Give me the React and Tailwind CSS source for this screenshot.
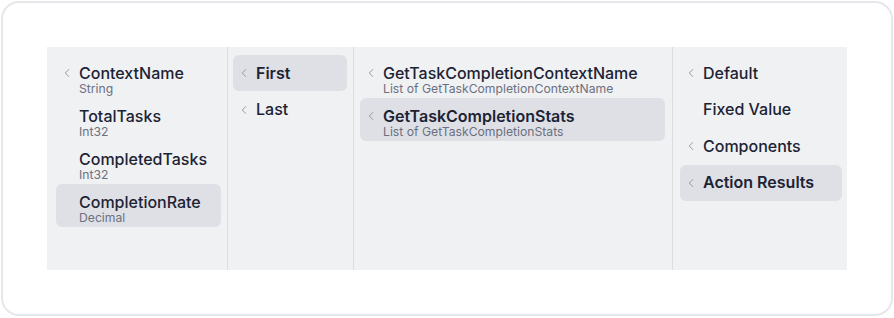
import { ChevronLeft } from "lucide-react";

const COLUMNS = [
  {
    id: "fields",
    width: "w-[181px]",
    pad: "pl-[9px] pr-[6px]",
    items: [
      { label: "ContextName", sub: "String", chevron: true },
      { label: "TotalTasks", sub: "Int32" },
      { label: "CompletedTasks", sub: "Int32" },
      { label: "CompletionRate", sub: "Decimal", active: true },
    ],
  },
  {
    id: "pick",
    width: "w-[126px]",
    pad: "pl-[5px] pr-[6px]",
    items: [
      { label: "First", chevron: true, active: true, strong: true },
      { label: "Last", chevron: true },
    ],
  },
  {
    id: "actions",
    width: "w-[319px]",
    pad: "pl-[6px] pr-[7px]",
    items: [
      {
        label: "GetTaskCompletionContextName",
        sub: "List of GetTaskCompletionContextName",
        chevron: true,
      },
      {
        label: "GetTaskCompletionStats",
        sub: "List of GetTaskCompletionStats",
        chevron: true,
        active: true,
        strong: true,
      },
    ],
  },
  {
    id: "source",
    width: "flex-1",
    pad: "pl-[7px] pr-[5px]",
    last: true,
    items: [
      { label: "Default", chevron: true },
      { label: "Fixed Value" },
      { label: "Components", chevron: true },
      { label: "Action Results", chevron: true, active: true, strong: true },
    ],
  },
];

function Item({ item }) {
  return (
    <div
      className={`flex items-start rounded-md pl-[8px] pr-2 ${
        item.sub ? "pt-[8.5px] pb-[2.5px]" : "pt-[8.5px] pb-[8.5px]"
      } ${item.active ? "bg-[#dfe0e5]" : ""}`}
    >
      <span className="w-[15px] h-[19px] flex items-center shrink-0">
        {item.chevron && (
          <ChevronLeft size={14} strokeWidth={1.5} className="text-[#8a8e98] -ml-[4px]" />
        )}
      </span>
      <div className="flex flex-col min-w-0">
        <span
          className={`text-[16px] leading-[19px] text-[#1c2334] whitespace-nowrap ${
            item.strong ? "font-semibold" : "font-medium"
          }`}
        >
          {item.label}
        </span>
        {item.sub && (
          <span className="text-[12.2px] leading-[12.5px] text-[#6b7080] whitespace-nowrap">
            {item.sub}
          </span>
        )}
      </div>
    </div>
  );
}

export default function App() {
  return (
    <div
      className="w-[894px] h-[318px] bg-white pl-px pt-px"
      style={{ fontFamily: "Inter, 'Noto Sans', sans-serif" }}
    >
      <div className="w-[892px] h-[315px] rounded-[18px] border-2 border-[#e6e7ea] p-[44px]">
        <div className="flex w-[800px] h-[223px] bg-[#f0f1f3]">
          {COLUMNS.map((col) => (
            <div
              key={col.id}
              className={`${col.width} ${col.pad} pt-[8px] flex flex-col gap-[0.6px] ${
                col.last ? "" : "border-r border-[#dcdde1]"
              }`}
            >
              {col.items.map((item) => (
                <Item key={item.label} item={item} />
              ))}
            </div>
          ))}
        </div>
      </div>
    </div>
  );
}
